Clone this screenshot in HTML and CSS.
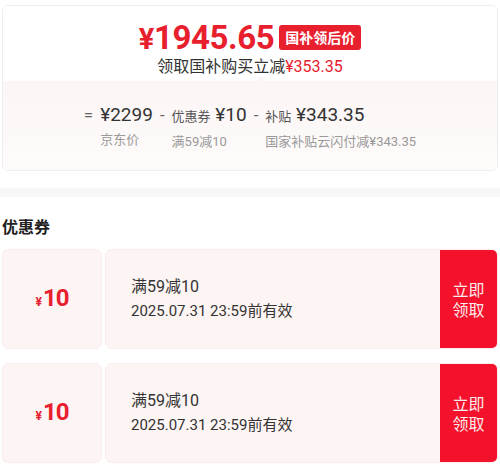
FILE: index.html
```html
<!DOCTYPE html>
<html lang="zh-CN">
  <head>
    <meta charset="UTF-8" />
    <meta name="viewport" content="width=device-width, initial-scale=1.0" />
    <title>国补价格</title>
    <link rel="stylesheet" href="styles.css">
  </head>
  <body>
    <div class="top-wrap">
      <div class="price-card">
        <!-- Final price -->
        <div class="price-head">
          <div class="price-line">
            <span class="price"><span class="yen">¥</span>1945.65</span>
            <span class="price-tag">国补领后价</span>
          </div>
          <div class="price-sub">领取国补购买立减<span class="red">¥353.35</span></div>
        </div>

        <!-- Price breakdown -->
        <div class="price-calc">
          <span class="op">=</span>
          <div class="calc-item">
            <div class="calc-value">¥2299</div>
            <div class="calc-label">京东价</div>
          </div>
          <span class="op">-</span>
          <div class="calc-item">
            <div class="calc-value"><small>优惠券</small> ¥10</div>
            <div class="calc-label">满59减10</div>
          </div>
          <span class="op">-</span>
          <div class="calc-item">
            <div class="calc-value"><small>补贴</small> ¥343.35</div>
            <div class="calc-label">国家补贴云闪付减¥343.35</div>
          </div>
        </div>
      </div>
    </div>

    <div class="divider"></div>

    <div class="coupon-section">
      <h2>优惠券</h2>

      <div class="coupon">
        <div class="coupon-amount"><span class="yen">¥</span>10</div>
        <div class="coupon-body">
          <div class="coupon-info">
            <div class="coupon-rule">满59减10</div>
            <div class="coupon-date">2025.07.31 23:59前有效</div>
          </div>
          <button class="coupon-btn" type="button"><span>立即</span><span>领取</span></button>
        </div>
      </div>

      <div class="coupon">
        <div class="coupon-amount"><span class="yen">¥</span>10</div>
        <div class="coupon-body">
          <div class="coupon-info">
            <div class="coupon-rule">满59减10</div>
            <div class="coupon-date">2025.07.31 23:59前有效</div>
          </div>
          <button class="coupon-btn" type="button"><span>立即</span><span>领取</span></button>
        </div>
      </div>
    </div>
  </body>
</html>
```

FILE: styles.css
```css
/* General Styles */
body {
  margin: 0;
  font-family: "Roboto", "Noto Sans CJK SC", sans-serif;
  background: #fff;
  color: #333;
}

.top-wrap {
  padding: 5px 2px 0;
}

.price-card {
  border: 1px solid #eee;
  border-radius: 6px;
  overflow: hidden;
}

/* Final price */
.price-head {
  padding: 12px 0 3px;
  text-align: center;
  background: #fff;
}

.price-line {
  display: flex;
  justify-content: center;
  align-items: center;
  gap: 5px;
  height: 38px;
}

.price {
  font-size: 33px;
  font-weight: 700;
  color: #e8202e;
  letter-spacing: -0.4px;
}

.price .yen {
  font-size: 29px;
}

.price-tag {
  background-color: #e8202e;
  color: #fff;
  font-size: 14px;
  font-weight: 700;
  line-height: 25px;
  padding: 0 6px;
  border-radius: 3px;
  font-family: "Noto Sans CJK SC", sans-serif;
}

.price-sub {
  font-size: 16px;
  line-height: 22px;
  color: #333;
}

.red {
  color: #e8202e;
}

/* Price breakdown */
.price-calc {
  position: relative;
  display: flex;
  justify-content: center;
  gap: 7px;
  padding: 22px 0 19px;
  background: linear-gradient(#fcf5f5, #fefbfb);
}

.price-calc::before {
  content: "";
  position: absolute;
  top: -5px;
  left: 253px;
  border: 5px solid transparent;
  border-top: 0;
  border-bottom-color: #fcf5f5;
}

.op {
  font-size: 17px;
  line-height: 24px;
  color: #666;
}

.calc-value {
  font-size: 19px;
  line-height: 24px;
  color: #333;
  white-space: nowrap;
}

.calc-value small {
  font-size: 13px;
  color: #555;
}

.calc-label {
  margin-top: 4px;
  font-size: 13px;
  line-height: 18px;
  color: #999;
  white-space: nowrap;
}

.divider {
  height: 9px;
  margin-top: 17px;
  background-color: #f7f7fa;
}

/* Coupons */
.coupon-section {
  padding: 0 2px;
}

.coupon-section h2 {
  margin: 18px 0 12px;
  font-size: 16px;
  line-height: 22px;
  font-weight: 700;
  color: #222;
  font-family: "Noto Sans CJK SC", sans-serif;
}

.coupon {
  position: relative;
  display: flex;
  gap: 3px;
  height: 100px;
  margin-bottom: 14px;
}

.coupon::before,
.coupon::after {
  content: "";
  position: absolute;
  left: 97px;
  width: 9px;
  height: 9px;
  border-radius: 50%;
  background: #fff;
}

.coupon::before {
  top: -5px;
}

.coupon::after {
  bottom: -5px;
}

.coupon-amount {
  width: 100px;
  display: flex;
  justify-content: center;
  align-items: baseline;
  padding-top: 34px;
  box-sizing: border-box;
  background-color: #fdf4f4;
  border: 1px solid #f8eded;
  border-radius: 6px;
  color: #e8202e;
  font-size: 24px;
  font-weight: 700;
  letter-spacing: -1px;
}

.coupon-amount .yen {
  font-size: 12px;
  font-weight: 700;
  margin-right: 2px;
}

.coupon-body {
  flex: 1;
  display: flex;
  background-color: #fdf4f4;
  border: 1px solid #f8eded;
  border-radius: 6px;
  overflow: hidden;
}

.coupon-info {
  flex: 1;
  display: flex;
  flex-direction: column;
  justify-content: center;
  padding-left: 25px;
}

.coupon-rule {
  font-size: 16px;
  line-height: 25px;
  color: #333;
}

.coupon-date {
  font-size: 15px;
  line-height: 25px;
  color: #333;
}

.coupon-btn {
  width: 57px;
  border: none;
  background-color: #f4112b;
  color: #fdeaec;
  font-family: "Noto Sans CJK SC", sans-serif;
  font-size: 16px;
  line-height: 20px;
  padding: 0;
  cursor: pointer;
  display: flex;
  flex-direction: column;
  justify-content: center;
  align-items: center;
}

.coupon-btn span {
  display: block;
}
```
